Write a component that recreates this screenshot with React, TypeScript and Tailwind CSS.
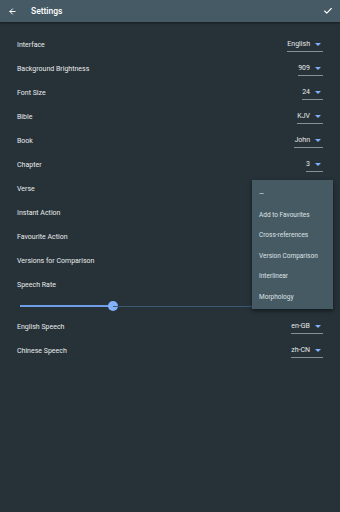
import { ArrowLeft, Check } from "lucide-react"

type Row = { label: string; value?: string }

const topRows: Row[] = [
  { label: "Interface", value: "English" },
  { label: "Background Brightness", value: "909" },
  { label: "Font Size", value: "24" },
  { label: "Bible", value: "KJV" },
  { label: "Book", value: "John" },
  { label: "Chapter", value: "3" },
  { label: "Verse" },
  { label: "Instant Action" },
  { label: "Favourite Action" },
  { label: "Versions for Comparison" },
  { label: "Speech Rate" },
]

const bottomRows: Row[] = [
  { label: "English Speech", value: "en-GB" },
  { label: "Chinese Speech", value: "zh-CN" },
]

const menuItems = ["—", "Add to Favourites", "Cross-references", "Version Comparison", "Interlinear", "Morphology"]

function Dropdown({ value }: { value: string }) {
  return (
    <div className="flex min-w-[17px] items-center justify-between border-b border-[#8a8f92] pb-[2px] pr-[2px] pt-[2px]">
      <span className="text-[7px] leading-[9px] text-[#e6e8e9]">{value}</span>
      <span className="ml-[5px] h-0 w-0 border-x-[3px] border-t-[3px] border-x-transparent border-t-[#82b1ff]" />
    </div>
  )
}

function SettingRow({ row }: { row: Row }) {
  return (
    <div className="flex h-[24px] items-center justify-between pl-[17px] pr-[17px]">
      <span className="text-[7px] text-[#e9ebec]">{row.label}</span>
      {row.value && <Dropdown value={row.value} />}
    </div>
  )
}

export default function App() {
  return (
    <div
      className="relative h-[512px] w-[340px] overflow-hidden bg-[#263238]"
      style={{ fontFamily: "Roboto, 'Liberation Sans', sans-serif" }}
    >
      <header className="relative z-10 flex h-[22px] items-center bg-[#455a64] shadow-[0_1px_2px_rgba(0,0,0,0.45)]">
        <ArrowLeft className="ml-[8px] h-[9px] w-[9px] text-white" strokeWidth={2.6} />
        <span className="ml-[14px] text-[8.5px] font-medium text-white">Settings</span>
        <Check className="ml-auto mr-[7px] h-[10px] w-[10px] text-white" strokeWidth={2.6} />
      </header>

      <div className="pt-[11px]">
        {topRows.map((r) => (
          <SettingRow key={r.label} row={r} />
        ))}

        <div className="flex h-[18px] items-center pl-[20px] pr-[20px]">
          <div className="relative flex h-[10px] flex-1 items-center">
            <div className="h-[2px] w-[93px] bg-[#6f9ee6]" />
            <div className="h-[10px] w-[10px] -ml-[5px] -mr-[5px] rounded-full bg-[#82b1ff]" />
            <div className="h-[1px] flex-1 bg-[#3c5a76]" />
          </div>
        </div>

        {bottomRows.map((r) => (
          <SettingRow key={r.label} row={r} />
        ))}
      </div>

      <div className="absolute left-[252px] top-[180px] w-[81px] bg-[#465a64] pb-[1px] pt-[5px] shadow-[0_2px_4px_rgba(0,0,0,0.5)]">
        {menuItems.map((m) => (
          <div key={m} className="flex h-[20.5px] items-center pl-[7px] text-[6.5px] text-[#dde2e4]">
            {m}
          </div>
        ))}
      </div>
    </div>
  )
}
